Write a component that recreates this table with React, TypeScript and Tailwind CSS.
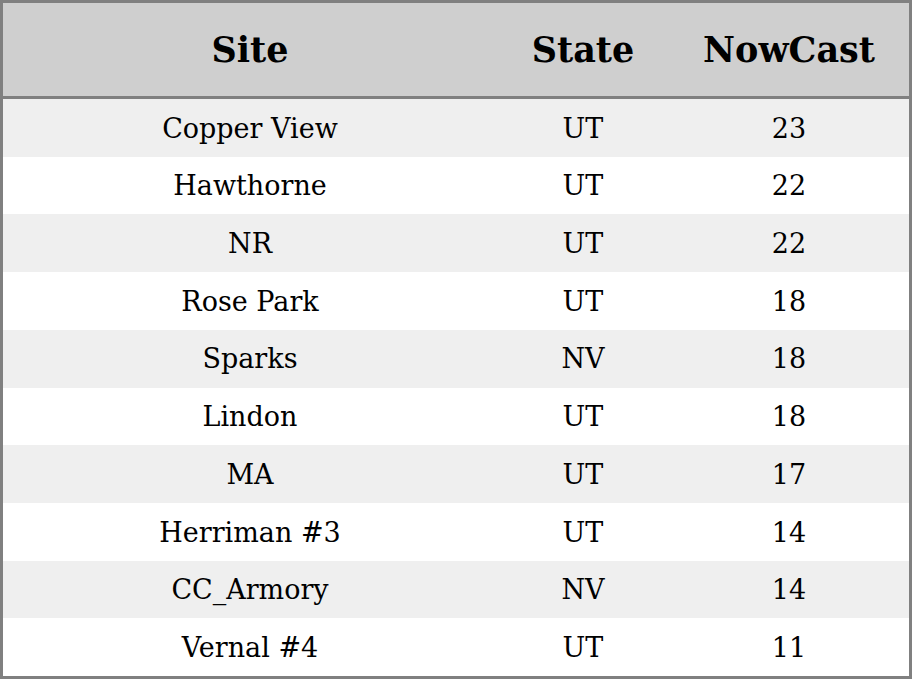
import React from "react";

const rows: [string, string, string][] = [
  ["Copper View", "UT", "23"],
  ["Hawthorne", "UT", "22"],
  ["NR", "UT", "22"],
  ["Rose Park", "UT", "18"],
  ["Sparks", "NV", "18"],
  ["Lindon", "UT", "18"],
  ["MA", "UT", "17"],
  ["Herriman #3", "UT", "14"],
  ["CC_Armory", "NV", "14"],
  ["Vernal #4", "UT", "11"],
];

export default function App() {
  return (
    <div
      className="w-[912px] h-[679px] border-[3px] border-[#808080] bg-white flex flex-col text-black"
      style={{ fontFamily: '"DejaVu Serif", serif' }}
    >
      <div className="h-[96px] shrink-0 bg-[#cfcfcf] border-b-[3px] border-[#808080] grid grid-cols-[494px_172px_240px] items-center text-[35px] font-bold pt-[1px]">
        <div className="text-center">Site</div>
        <div className="text-center">State</div>
        <div className="text-center">NowCast</div>
      </div>
      {rows.map((r, i) => (
        <div
          key={i}
          className={`flex-1 grid grid-cols-[494px_172px_240px] items-center text-[27px] pt-[2px] ${
            i % 2 === 0 ? "bg-[#efefef]" : "bg-white"
          }`}
        >
          <div className="text-center">{r[0]}</div>
          <div className="text-center">{r[1]}</div>
          <div className="text-center">{r[2]}</div>
        </div>
      ))}
    </div>
  );
}
